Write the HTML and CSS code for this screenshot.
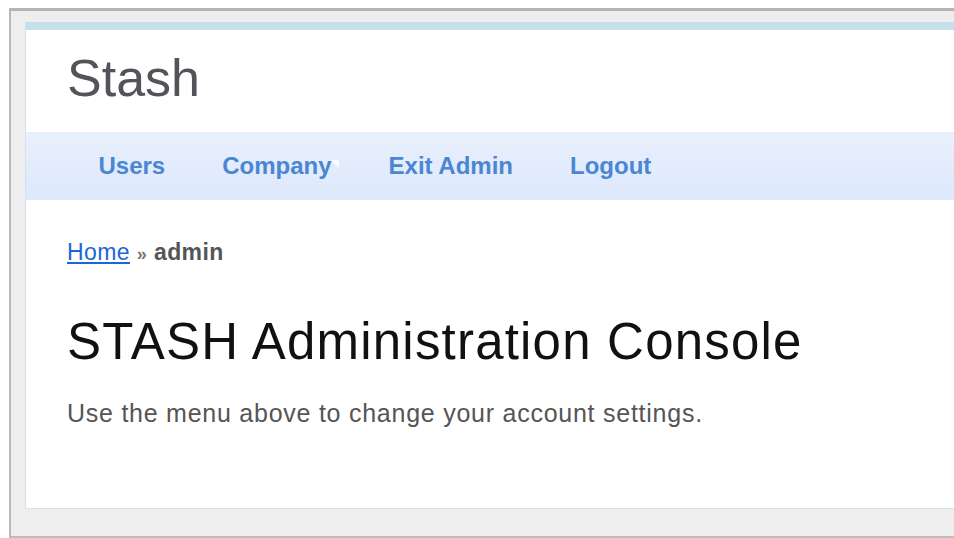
FILE: index.html
```html
<!DOCTYPE html>
<html lang="en">
<head>
<meta charset="utf-8">
<title>Stash - Administration</title>
<link rel="stylesheet" href="styles.css">
</head>
<body>
<div class="frame">
  <div class="page">
    <header class="site-header">
      <div class="site-title">Stash</div>
    </header>
    <nav class="mainmenu">
      <ul>
        <li><a href="#">Users</a></li>
        <li class="has-sub"><a href="#">Company</a><span class="sub-arrow"></span></li>
        <li><a href="#">Exit Admin</a></li>
        <li><a href="#">Logout</a></li>
      </ul>
    </nav>
    <main class="content">
      <div class="breadcrumbs"><a href="#">Home</a> <span class="sep">&raquo;</span> <span class="current">admin</span></div>
      <h1>STASH Administration Console</h1>
      <p>Use the menu above to change your account settings.</p>
    </main>
  </div>
</div>
</body>
</html>
```

FILE: styles.css
```css
html, body {
  margin: 0;
  padding: 0;
  background: #ffffff;
  overflow: hidden;
}

body {
  padding: 8px 0 0 9px;
  font-family: "Liberation Sans", Arial, sans-serif;
}

/* outer window frame, open on the right */
.frame {
  background: #eeeeee;
  border-top: 3px solid #b4b4b4;
  border-left: 2px solid #b8b8b8;
  border-bottom: 2px solid #bdbdbd;
  padding: 11px 0 27px 14px;
}

.page {
  background: #ffffff;
  border-top: 8px solid #c7dfeb;
  border-left: 1px solid #d3e4ee;
  border-bottom: 1px solid #d3e4ee;
}

.site-header {
  height: 102px;
  box-sizing: border-box;
  padding: 22px 0 0 41px;
}

.site-title {
  font-size: 52px;
  line-height: 52px;
  color: #525459;
}

.mainmenu {
  height: 68px;
  box-sizing: border-box;
  border-top: 1px solid #e3ecfb;
  background: linear-gradient(to bottom, #e9f0fd, #dde8fc);
}

.mainmenu ul {
  list-style: none;
  margin: 0;
  padding: 0 0 0 44px;
  display: flex;
}

.mainmenu li {
  position: relative;
  padding: 0 28.5px;
}

.mainmenu a {
  display: block;
  font-size: 24px;
  font-weight: bold;
  line-height: 66px;
  color: #4a86d2;
  text-decoration: none;
}

.sub-arrow {
  position: absolute;
  right: 21px;
  top: 27px;
  width: 0;
  height: 0;
  border-top: 8px solid rgba(255, 255, 255, 0.85);
  border-left: 9px solid transparent;
}

.content {
  padding: 40px 0 81px 41px;
}

.breadcrumbs {
  font-size: 23px;
  line-height: 24px;
  letter-spacing: 0.4px;
  color: #555555;
}

.breadcrumbs a {
  color: #1a66d6;
  text-decoration: underline;
}

.breadcrumbs .sep {
  font-size: 18px;
  font-weight: bold;
  color: #777777;
}

.breadcrumbs .current {
  font-weight: bold;
}

h1 {
  margin: 48px 0 0 0;
  font-size: 51px;
  line-height: 56px;
  letter-spacing: 1.2px;
  font-weight: normal;
  color: #111111;
}

p {
  margin: 29px 0 0 0;
  font-size: 25px;
  line-height: 28px;
  letter-spacing: 0.75px;
  color: #555555;
}
```
